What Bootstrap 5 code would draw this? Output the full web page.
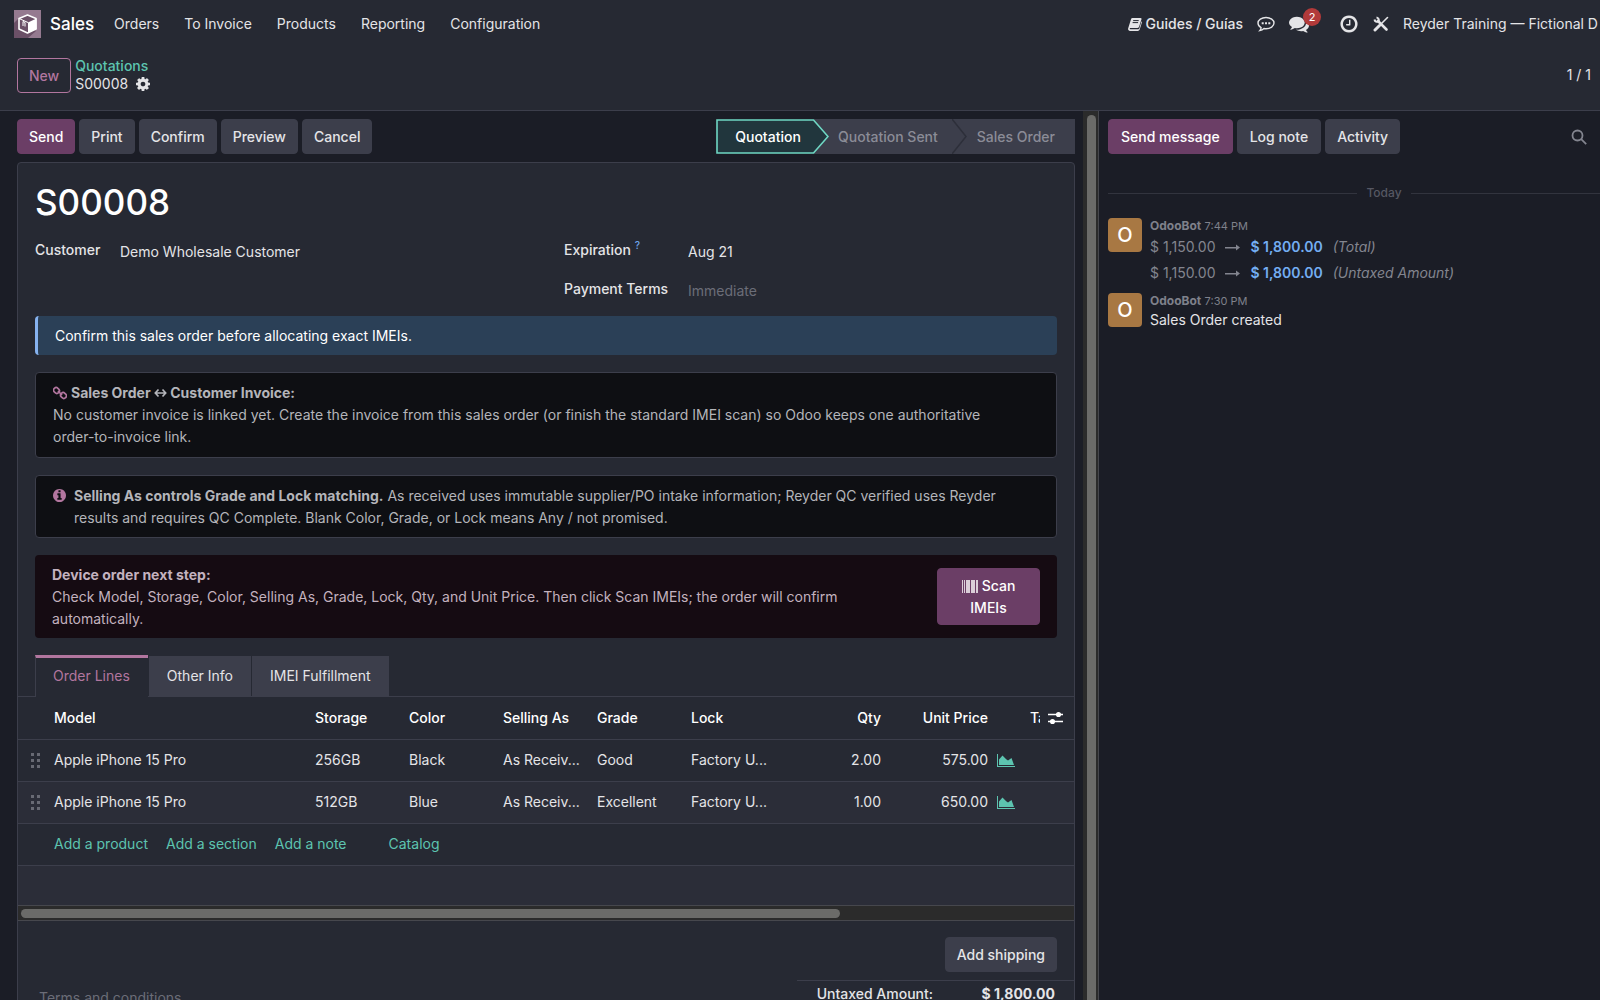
<!DOCTYPE html>
<html lang="en" data-bs-theme="dark">
<head>
<meta charset="utf-8">
<meta name="viewport" content="width=device-width, initial-scale=1">
<title>S00008 - Sales</title>
<link href="https://cdn.jsdelivr.net/npm/bootstrap@5.3.0/dist/css/bootstrap.min.css" rel="stylesheet">
<style>
:root { --ink: #e4e4e7; --line: #3c3e4b; --sheet: #262933; --stripe: #2b2d38; --plum: #6b3e66; --pink: #b2769f; --teal: #5dc4b0; --muted: #6b6d78; }
body { font-family: Inter, "Liberation Sans", sans-serif; font-size: 14px; line-height: 22px; background: #1b1d26; color: var(--ink); }
a { text-decoration: none; color: inherit; }
svg { display: block; flex: none; fill: currentColor; }
svg.outline { fill: none; stroke: currentColor; }
.topbar { background: var(--sheet); height: 48px; padding-left: 14px; white-space: nowrap; }
.topbar-menu { gap: 25px; margin-left: 20px; }
.brand { font-size: 17px; font-weight: 500; color: #fff; margin-left: 9px; }
.company { width: 197px; margin-left: 16px; }
.systray { gap: 14px; }
.strong { font-weight: 500; }
.count { left: 14px; top: -6px; width: 18px; height: 18px; font-size: 11px; line-height: 18px; background: #b23a3a; color: #fff; }
.control { background: var(--sheet); border-bottom: 1px solid var(--line); height: 63px; padding: 0 9px 8px 17px; }
.crumbs { line-height: 18px; margin-left: 4px; }
.teal, .teal:hover { color: var(--teal); }
.btn { font-size: 14px; font-weight: 500; line-height: 21px; padding: 6px 11px; border-radius: 4px; --bs-btn-color: var(--ink); --bs-btn-bg: #3c3e4b; --bs-btn-border-color: #3c3e4b; --bs-btn-hover-color: #fff; --bs-btn-hover-bg: #4a4c5a; white-space: nowrap; }
.btn-plum { --bs-btn-bg: var(--plum); --bs-btn-border-color: var(--plum); --bs-btn-color: #fff; --bs-btn-hover-bg: #7c4a77; }
.btn-line { --bs-btn-bg: transparent; --bs-btn-border-color: var(--pink); --bs-btn-color: var(--pink); }
.form-side { padding: 8px 8px 0 17px; }
.action-bar { height: 35px; margin-bottom: 8px; gap: 4px; }
.stage { height: 35px; background: #3c3e4b; color: #8b8c97; border: 0; font-weight: 500; padding: 0 20px 0 10px; }
.stage-mid { margin-left: -15px; padding: 0 0 0 24px; gap: 14px; }
.stage-now { background: none; color: #fff; width: 113px; padding: 0; z-index: 1; }
.stage-now svg { left: 0; top: 0; }
.stage-now span { width: 104px; }
.sheet { background: var(--sheet); border: 1px solid var(--line); border-radius: 4px 4px 0 0; padding: 0 17px; }
.title { font-size: 35px; font-weight: 500; line-height: 44px; color: #fff; margin: 17px 0 14px; }
.fields { line-height: 24px; }
.fields label { font-weight: 500; }
.field-cell { padding-left: 18px; }
.plain { background: none; border: 0; color: inherit; padding: 0; min-width: 0; height: 24px; line-height: 24px; }
.fields .plain { height: 26px; }
.plain::placeholder { color: var(--muted); opacity: 1; }
.field-row { height: 39px; }
.label-a { width: 85px; } .label-b { width: 124px; }
.help { color: #6ea3e8; font-size: 10px; top: -6px; }
.note { border-radius: 4px; padding: 9px 17px; margin-bottom: 17px; border: 1px solid var(--line); background: #0e0f13; color: #b4b5ba; }
.note-info { background: #2b4057; color: #fff; border: 0; border-left: 3px solid #86b2ef; height: 39px; }
.note-tight { padding: 9px 17px 8px; }
.note-step { background: #150b12; border: 0; color: #c3b2bf; height: 83px; padding: 8px 17px; }
.scan { width: 103px; height: 57px; white-space: normal; padding: 5px 12px; line-height: 22px; }
.pink { color: var(--pink); }
.tabs { margin: 0 -17px; padding-left: 17px; border-bottom: 1px solid var(--line); gap: 1px; }
.tabs .nav-link { border: 0; border-radius: 0; background: #3c3e4b; color: var(--ink); padding: 9px 18px; height: 40px; margin: 1px 0 0; }
.tabs .nav-link.active { background: var(--sheet); color: var(--pink); border-left: 1px solid var(--line); border-top: 3px solid var(--pink); padding: 7px 18px 9px 17px; height: 42px; margin: 0 0 -1px; }
.lines { margin: 0 -17px; overflow: hidden; }
.lines table { table-layout: fixed; width: 100%; }
.lines th, .lines td { border-bottom: 1px solid var(--line); padding: 0 3px 0 9px; height: 42px; vertical-align: middle; white-space: nowrap; overflow: hidden; text-overflow: ellipsis; }
.lines th { font-weight: 500; color: #fff; text-overflow: clip; }
.lines .text-end { padding-right: 9px; }
.lines td.blank { height: 40px; border: 0; }
.lines tbody tr:nth-child(even) { background: var(--stripe); }
.lines .tight { padding: 0; text-overflow: clip; }
.add-links { gap: 18px; }
.h-scroll { height: 16px; background: #2b2b2b; border-top: 1px solid #46474d; border-bottom: 1px solid #46474d; padding: 3px 3px; margin: 0 -17px; }
.h-thumb { background: #6b6b69; width: 78%; height: 9px; border-radius: 5px; }
.v-scroll { width: 16px; background: #2b2b2b; border-right: 1px solid #46474d; padding: 4px 2px 0 4px; }
.v-thumb { background: #6b6b69; height: 100%; border-radius: 5px 5px 0 0; }
.terms { padding-left: 4px; margin-top: 65px; }
.totals { width: 277px; border-top: 1px solid var(--line); margin: 8px -17px 0 0; padding: 2px 19px 0 0; font-weight: 500; }
.totals b { width: 122px; text-align: right; }
.chatter { flex: 0 0 501px; padding: 8px 0 0 9px; }
.finder { margin-right: 13px; }
.day { margin: 29px -60px 15px 0; font-size: 12px; line-height: 20px; color: #565863; gap: 9px; font-weight: 500; }
.day i { height: 1px; background: #32343e; }
.avatar { width: 34px; height: 34px; border-radius: 4px; background: #a87843; color: #fff; font-size: 20px; line-height: 34px; text-align: center; font-weight: 500; margin-right: 8px; flex: none; }
.message { margin-bottom: 7px; }
.who { font-size: 12px; line-height: 15px; color: #7f818b; }
.who span { font-size: 11px; }
.change { height: 26px; gap: 10px; line-height: 26px; }
.grayish { color: #83858f; }
.blueish { color: #74aef2; }
</style>
</head>
<body class="vh-100 overflow-hidden d-flex flex-column">
<header>
  <nav class="topbar d-flex align-items-center justify-content-between overflow-hidden">
    <div class="d-flex align-items-center">
      <svg width="27" height="28" viewBox="0 0 27 28"><rect width="27" height="28" fill="#957a90"/><path d="M0 13L5 8l17 13-8 7H0z" fill="#6b5067"/><path d="M13.500 5l8.500 3.500v10.500l-8.500 4-8.500-4V8.500z" fill="#6b5067" stroke="#fff" stroke-width="1.600" stroke-linejoin="round"/><path d="M14 12.500l8.500-4V19L14 23z" fill="#fff"/><path d="M5 8.500l9 4M9 16v-4.500l2 1v4" stroke="#fff" stroke-width="1" fill="none"/></svg>
      <a class="brand" href="#">Sales</a>
      <div class="topbar-menu d-flex"><a href="#">Orders</a><a href="#">To Invoice</a><a href="#">Products</a><a href="#">Reporting</a><a href="#">Configuration</a></div>
    </div>
    <div class="systray d-flex align-items-center">
      <a href="#" class="d-flex align-items-center strong"><svg class="me-1" width="14" height="14" viewBox="0 0 14 14"><path d="M4.500 1h8c.8 0 1.200.5 1 1.200l-2.400 7.600c-.2.700-.8 1.200-1.600 1.200H2.200c-.7 0-.7 1.200.2 1.200h7.800c.6 0 .9-.3 1.100-.8l2.200-7.200c.5.400.6.800.4 1.400l-2.200 7c-.3.900-1 1.400-1.900 1.400H2C.6 14-.3 12.600.2 11.300L3 2.200C3.200 1.400 3.700 1 4.500 1z"/><path d="M5.200 3.600h5.500M4.600 5.600h5.500" stroke="#262933" fill="none"/></svg>Guides / Guías</a>
      <a href="#" aria-label="Comment"><svg class="outline" width="18" height="16" viewBox="0 0 18 16" stroke-width="1.400"><path d="M9 1.500c4.500 0 8 2.500 8 5.600s-3.500 5.600-8 5.600c-.7 0-1.400-.1-2-.2-1.300 1.300-2.700 1.900-4.200 2.100.8-.9 1.200-1.800 1.300-2.900C2.200 10.700 1 9 1 7.100c0-3.100 3.500-5.600 8-5.600z"/><path d="M4.700 7.200h2M8 7.200h2M11.300 7.200h2" stroke-width="2"/></svg></a>
      <a href="#" class="position-relative" aria-label="Messages"><svg width="20" height="20" viewBox="0 0 1792 1792"><path d="M1408 768q0 139-94 257t-256.500 186.500-353.500 68.500q-86 0-176-16-124 88-278 128-36 9-86 16h-3q-11 0-20.500-8t-11.500-21q-1-3-1-6.500t.5-6.500 2-6l2.500-5 3.500-5.500 4-5 4.500-5 4-4.500q5-6 23-25t26-29.500 22.500-29 25-38.500 20.500-44q-124-72-195-177t-71-224q0-139 94-257t256.500-186.500 353.500-68.500 353.500 68.500 256.500 186.500 94 257zm384 256q0 120-71 224.500t-195 176.500q10 24 20.500 44t25 38.500 22.500 29 26 29.500 23 25q1 1 4 4.500t4.500 5 4 5 3.500 5.500l2.500 5 2 6 .5 6.500-1 6.500q-3 14-13 22t-22 7q-50-7-86-16-154-40-278-128-90 16-176 16-271 0-472-132 58 4 88 4 161 0 309-45t264-129q125-92 192-212t67-254q0-77-23-152 129 71 204 178t75 230z"/></svg><span class="count position-absolute rounded-circle text-center">2</span></a>
      <a href="#" class="ps-3" aria-label="Activities"><svg width="20" height="20" viewBox="0 0 1792 1792"><path d="M1024 544v448q0 14-9 23t-23 9h-320q-14 0-23-9t-9-23v-64q0-14 9-23t23-9h224v-352q0-14 9-23t23-9h64q14 0 23 9t9 23zm416 352q0-148-73-273t-198-198-273-73-273 73-198 198-73 273 73 273 198 198 273 73 273-73 198-198 73-273zm224 0q0 209-103 385.500t-279.500 279.500-385.500 103-385.500-103-279.500-279.500-103-385.500 103-385.500 279.500-279.500 385.500-103 385.500 103 279.500 279.500 103 385.500z"/></svg></a>
      <a href="#" aria-label="Tools"><svg class="outline" width="16" height="16" viewBox="0 0 16 16"><path d="M5 5l8.500 8.500" stroke-width="2.600" stroke-linecap="round"/><path d="M1.500 3.500A2.700 2.700 0 0 0 5.500 5.500 2.700 2.700 0 0 0 3.500 1.500" stroke-width="2"/><path d="M14.500 1.500L8.500 7.500" stroke-width="1.600" stroke-linecap="round"/><path d="M6.500 9.500L2 14" stroke-width="3" stroke-linecap="round"/></svg></a>
      <a href="#" class="company ms-0">Reyder Training — Fictional D</a>
    </div>
  </nav>
  <div class="control d-flex align-items-center justify-content-between">
    <div class="d-flex align-items-center">
      <button type="button" class="btn btn-line">New</button>
      <div class="crumbs"><a href="#" class="teal strong">Quotations</a>
        <div class="d-flex align-items-center">S00008<svg class="ms-2" width="14" height="14" viewBox="128 128 1536 1536"><path d="M1152 896q0-106-75-181t-181-75-181 75-75 181 75 181 181 75 181-75 75-181zm512-109v222q0 12-8 23t-20 13l-185 28q-19 54-39 91 35 50 107 138 10 12 10 25t-9 23q-27 37-99 108t-94 71q-12 0-26-9l-138-108q-44 23-91 38-16 136-29 186-7 28-36 28h-222q-14 0-24.500-8.500t-11.500-21.500l-28-184q-49-16-90-37l-141 107q-10 9-25 9-14 0-25-11-126-114-165-168-7-10-7-23 0-12 8-23 15-21 51-66.500t54-70.500q-27-50-41-99l-183-27q-13-2-21-12.500t-8-23.500v-222q0-12 8-23t19-13l186-28q14-46 39-92-40-57-107-138-10-12-10-24 0-10 9-23 26-36 98.500-107.500t94.500-71.500q13 0 26 10l138 107q44-23 91-38 16-136 29-186 7-28 36-28h222q14 0 24.500 8.500t11.500 21.500l28 184q49 16 90 37l142-107q9-9 24-9 13 0 25 10 129 119 165 170 7 8 7 22 0 12-8 23-15 21-51 66.500t-54 70.500q26 50 41 98l183 28q13 2 21 12.500t8 23.500z"/></svg></div>
      </div>
    </div>
    <span>1 / 1</span>
  </div>
</header>
<div class="d-flex flex-grow-1 overflow-hidden">
  <main class="form-side flex-grow-1 overflow-hidden">
    <div class="action-bar d-flex">
      <button type="button" class="btn btn-plum">Send</button>
      <button type="button" class="btn">Print</button>
      <button type="button" class="btn">Confirm</button>
      <button type="button" class="btn">Preview</button>
      <button type="button" class="btn">Cancel</button>
      <div class="d-flex ms-auto">
        <button type="button" class="stage stage-now position-relative"><svg class="position-absolute" width="113" height="35" viewBox="0 0 113 35"><path d="M1 1h96.500L112 17.500 97.500 34H1z" fill="#21363d" stroke="#6fd8c4" stroke-width="1.600"/></svg><span class="position-relative d-block">Quotation</span></button>
        <button type="button" class="stage stage-mid d-flex align-items-center">Quotation Sent<svg class="outline" width="15" height="35" viewBox="0 0 15 35"><path d="M0 0l14 17.500L0 35" stroke="#2d2f3a" stroke-width="1.500"/></svg></button>
        <button type="button" class="stage">Sales Order</button>
      </div>
    </div>
    <div class="sheet">
      <h1 class="title">S00008</h1>
      <div class="fields row g-0">
        <div class="col-6"><div class="d-flex align-items-start"><label class="label-a" for="customer">Customer</label><input id="customer" class="plain flex-grow-1" value="Demo Wholesale Customer"></div></div>
        <div class="col-6 field-cell">
          <div class="field-row d-flex align-items-start"><label class="label-b" for="expiration">Expiration <sup class="help">?</sup></label><input id="expiration" class="plain flex-grow-1" value="Aug 21"></div>
          <div class="field-row d-flex align-items-start"><label class="label-b" for="terms">Payment Terms</label><input id="terms" class="plain flex-grow-1" placeholder="Immediate"></div>
        </div>
      </div>
      <div class="note note-info">Confirm this sales order before allocating exact IMEIs.</div>
      <div class="note">
        <div class="d-flex align-items-center fw-bold"><svg class="outline pink me-1" width="14" height="14" viewBox="0 0 14 14" stroke-width="1.700"><rect x="1" y="1.500" width="5" height="6" rx="2.400" transform="rotate(-45 3.500 4.500)"/><rect x="8" y="6.500" width="5" height="6" rx="2.400" transform="rotate(-45 10.500 9.500)"/><path d="M5 5l4 4"/></svg>Sales Order&nbsp;<svg class="outline" width="13" height="10" viewBox="0 0 13 10" stroke-width="1.700"><path d="M1.500 5h10M4.500 1.500L1.300 5l3.200 3.500M8.500 1.500L11.700 5 8.500 8.500"/></svg>&nbsp;Customer Invoice:</div>
        No customer invoice is linked yet. Create the invoice from this sales order (or finish the standard IMEI scan) so Odoo keeps one authoritative <br>order-to-invoice link.
      </div>
      <div class="note note-tight d-flex">
        <svg class="pink mt-1 me-2" width="13" height="13" viewBox="128 128 1536 1536"><path d="M1152 1376v-160q0-14-9-23t-23-9h-96v-512q0-14-9-23t-23-9h-320q-14 0-23 9t-9 23v160q0 14 9 23t23 9h96v320h-96q-14 0-23 9t-9 23v160q0 14 9 23t23 9h448q14 0 23-9t9-23zm-128-896v-160q0-14-9-23t-23-9h-192q-14 0-23 9t-9 23v160q0 14 9 23t23 9h192q14 0 23-9t9-23zm640 416q0 209-103 385.500t-279.500 279.500-385.500 103-385.500-103-279.500-279.500-103-385.500 103-385.500 279.500-279.500 385.500-103 385.500 103 279.500 279.500 103 385.500z"/></svg>
        <div><b>Selling As controls Grade and Lock matching.</b> As received uses immutable supplier/PO intake information; Reyder QC verified uses Reyder results and requires QC Complete. Blank Color, Grade, or Lock means Any / not promised.</div>
      </div>
      <div class="note note-step d-flex align-items-center justify-content-between">
        <div class="pe-5"><b>Device order next step:</b><br>Check Model, Storage, Color, Selling As, Grade, Lock, Qty, and Unit Price. Then click Scan IMEIs; the order will confirm automatically.</div>
        <button type="button" class="btn btn-plum scan flex-shrink-0"><svg class="d-inline me-1" width="16" height="13" viewBox="0 0 16 13"><path d="M0 0h1v13H0zM2 0h1v13H2zM4 0h2v13H4zM6 0h2v13H6zM9 0h4v13H9zM14 0h2v13h-2z" opacity=".75"/></svg>Scan IMEIs</button>
      </div>
      <ul class="nav tabs">
        <li><a class="nav-link active" href="#">Order Lines</a></li>
        <li><a class="nav-link" href="#">Other Info</a></li>
        <li><a class="nav-link" href="#">IMEI Fulfillment</a></li>
      </ul>
      <div class="lines">
        <table>
          <colgroup><col style="width:27px"><col><col style="width:94px"><col style="width:94px"><col style="width:94px"><col style="width:94px"><col style="width:94px"><col style="width:114px"><col style="width:107px"><col style="width:33px"><col style="width:10px"><col style="width:34px"></colgroup>
          <thead><tr><th></th><th>Model</th><th>Storage</th><th>Color</th><th>Selling As</th><th>Grade</th><th>Lock</th><th class="text-end">Qty</th><th class="text-end">Unit Price</th><th></th><th class="tight">Taxes</th><th class="tight"><svg class="ms-2 outline" width="16" height="14" viewBox="0 0 16 14" stroke-width="1.500"><path d="M0 3.500h15M0 10.500h15"/><circle cx="10.500" cy="3.500" r="1.800" fill="currentColor"/><circle cx="4.500" cy="10.500" r="1.800" fill="currentColor"/></svg></th></tr></thead>
          <tbody>
            <tr><td class="tight"><svg class="ms-auto me-1 grayish" width="10" height="15" viewBox="0 0 10 15"><path d="M0 0h3v3H0zM6 0h3v3H6zM0 6h3v3H0zM6 6h3v3H6zM0 12h3v3H0zM6 12h3v3H6z" opacity=".7"/></svg></td><td>Apple iPhone 15 Pro</td><td>256GB</td><td>Black</td><td>As Receiv...</td><td>Good</td><td>Factory U...</td><td class="text-end">2.00</td><td class="text-end">575.00</td><td class="tight"><svg class="teal" width="18" height="13" viewBox="0 0 18 13"><path d="M0 0h1v12h17v1H0zM2 11V5.500L5.500 1.500l3.700 3.700L11 6.500 14.500 4 17 11z"/></svg></td><td></td><td></td></tr>
            <tr><td class="tight"><svg class="ms-auto me-1 grayish" width="10" height="15" viewBox="0 0 10 15"><path d="M0 0h3v3H0zM6 0h3v3H6zM0 6h3v3H0zM6 6h3v3H6zM0 12h3v3H0zM6 12h3v3H6z" opacity=".7"/></svg></td><td>Apple iPhone 15 Pro</td><td>512GB</td><td>Blue</td><td>As Receiv...</td><td>Excellent</td><td>Factory U...</td><td class="text-end">1.00</td><td class="text-end">650.00</td><td class="tight"><svg class="teal" width="18" height="13" viewBox="0 0 18 13"><path d="M0 0h1v12h17v1H0zM2 11V5.500L5.500 1.500l3.700 3.700L11 6.500 14.500 4 17 11z"/></svg></td><td></td><td></td></tr>
            <tr><td></td><td colspan="11"><div class="d-flex add-links"><a href="#" class="teal">Add a product</a><a href="#" class="teal">Add a section</a><a href="#" class="teal">Add a note</a><a href="#" class="teal ps-4">Catalog</a></div></td></tr>
            <tr><td colspan="12" class="blank"></td></tr>
          </tbody>
        </table>
      </div>
      <div class="h-scroll"><div class="h-thumb"></div></div>
      <div class="d-flex justify-content-between">
        <input class="plain terms" aria-label="Terms and conditions" placeholder="Terms and conditions">
        <div class="d-flex flex-column align-items-end pt-3">
          <button type="button" class="btn">Add shipping</button>
          <div class="totals d-flex justify-content-end"><span>Untaxed Amount:</span><b>$ 1,800.00</b></div>
        </div>
      </div>
    </div>
  </main>
  <div class="v-scroll flex-shrink-0"><div class="v-thumb"></div></div>
  <aside class="chatter overflow-hidden">
    <div class="action-bar d-flex align-items-center">
      <button type="button" class="btn btn-plum px-2 mx-0"><span class="px-1">Send message</span></button>
      <button type="button" class="btn px-2"><span class="px-1">Log note</span></button>
      <button type="button" class="btn">Activity</button>
      <svg class="outline ms-auto finder grayish" width="16" height="16" viewBox="0 0 16 16" stroke-width="1.800"><circle cx="6.500" cy="6.500" r="5"/><path d="M10.200 10.200l5 5"/></svg>
    </div>
    <div class="day d-flex align-items-center"><i class="flex-grow-1"></i>Today<i class="flex-grow-1"></i></div>
    <article class="message d-flex">
      <div class="avatar">O</div>
      <div><div class="who"><b>OdooBot</b> <span>7:44 PM</span></div>
        <div class="change d-flex align-items-center grayish">$ 1,150.00<svg width="15" height="7" viewBox="0 0 15 7"><path d="M0 3h11V.500L15 3.500 11 6.500V4.500H0z"/></svg><b class="blueish fw-semibold">$ 1,800.00</b><em>(Total)</em></div>
        <div class="change d-flex align-items-center grayish">$ 1,150.00<svg width="15" height="7" viewBox="0 0 15 7"><path d="M0 3h11V.500L15 3.500 11 6.500V4.500H0z"/></svg><b class="blueish fw-semibold">$ 1,800.00</b><em>(Untaxed Amount)</em></div>
      </div>
    </article>
    <article class="message d-flex">
      <div class="avatar">O</div>
      <div><div class="who">
        <b>OdooBot</b> <span>7:30 PM</span></div><div>Sales Order created</div></div>
    </article>
  </aside>
</div>
<script src="https://cdn.jsdelivr.net/npm/bootstrap@5.3.0/dist/js/bootstrap.bundle.min.js"></script>
</body>
</html>
